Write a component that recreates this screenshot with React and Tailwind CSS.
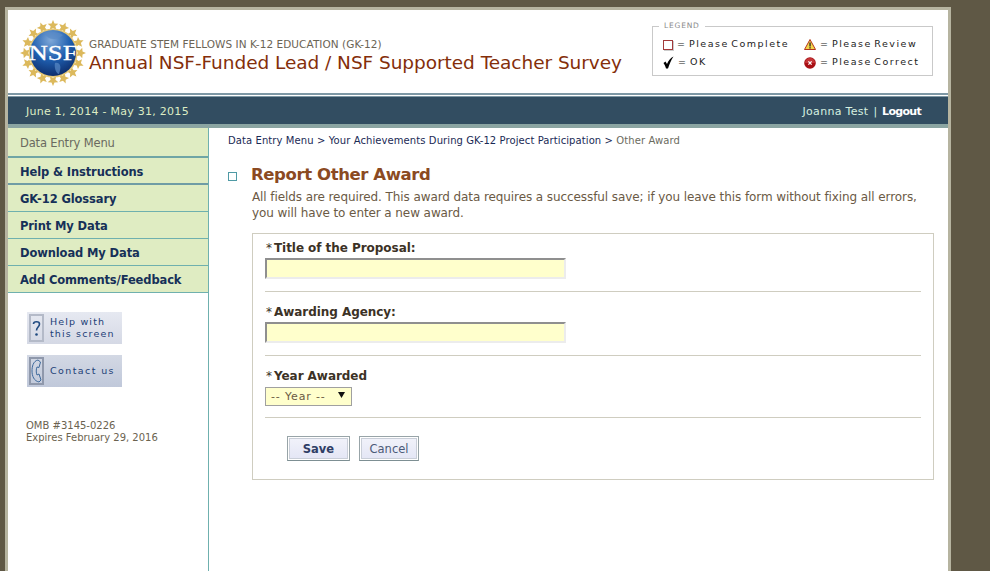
import React from 'react'

const menu = ['Help & Instructions', 'GK-12 Glossary', 'Print My Data', 'Download My Data', 'Add Comments/Feedback']

function star(r) {
  const pts = []
  for (let i = 0; i < 10; i++) {
    const rad = i % 2 === 0 ? r : r * 0.45
    const a = (Math.PI * i) / 5 - Math.PI / 2
    pts.push(`${(rad * Math.cos(a)).toFixed(2)},${(rad * Math.sin(a)).toFixed(2)}`)
  }
  return pts.join(' ')
}

function NsfLogo() {
  const stars = []
  for (let i = 0; i < 16; i++) {
    const a = (i * 360) / 16
    stars.push(
      <g key={i} transform={`rotate(${a}) translate(0,-27.5)`}>
        <polygon points={star(5.6)} fill="#dcb95c" />
      </g>
    )
  }
  return (
    <svg width="66" height="66" viewBox="-33 -33 66 66" className="shrink-0">
      <defs>
        <radialGradient id="globe" cx="45%" cy="22%" r="85%">
          <stop offset="0%" stopColor="#7fa8d8" />
          <stop offset="50%" stopColor="#1f5fb0" />
          <stop offset="100%" stopColor="#0b2560" />
        </radialGradient>
      </defs>
      {stars}
      <circle r="24.5" fill="#e6c877" />
      <circle r="23" fill="url(#globe)" />
      <path d="M-10,-20 C-4,-22 6,-21 10,-18 C6,-14 0,-13 -4,-15 Z M2,10 C7,9 9,13 6,21 C3,21 1,14 2,10 Z" fill="#5a8ac6" opacity="0.7" />
      <text x="0" y="7" textAnchor="middle" fill="#fff" stroke="#fff" strokeWidth="0.3" fontSize="21" fontFamily="'Liberation Serif', serif" textLength="49" lengthAdjust="spacingAndGlyphs">NSF</text>
    </svg>
  )
}

function LegendMark({ type }) {
  if (type === 'complete') {
    return (
      <span className="w-[10px] h-[10px] border border-[#a33a3a] bg-white shadow-[1px_1px_0_#ccc] shrink-0" />
    )
  }
  if (type === 'ok') {
    return (
      <svg width="11" height="13" viewBox="0 0 11 13" className="shrink-0">
        <path d="M0.5,7 L2.5,5.5 L4,8 C5.5,4.5 7.5,2 10.5,0.5 C8,4 6.5,8 5,12.5 L3,12.5 C2.5,10.5 1.5,8.5 0.5,7 Z" fill="#000" />
      </svg>
    )
  }
  if (type === 'review') {
    return (
      <svg width="12" height="11" viewBox="0 0 12 11" className="shrink-0">
        <path d="M6,0.5 L11.5,10.5 L0.5,10.5 Z" fill="#f3d54a" stroke="#b3361e" strokeWidth="1" />
        <rect x="5.4" y="3.5" width="1.3" height="4" fill="#222" />
        <rect x="5.4" y="8.2" width="1.3" height="1.3" fill="#222" />
      </svg>
    )
  }
  return (
    <svg width="12" height="12" viewBox="0 0 12 12" className="shrink-0">
      <circle cx="6" cy="6" r="5.8" fill="#a80f14" />
      <path d="M1,6 A5,5 0 0 1 11,6 Z" fill="#e05a5a" opacity="0.5" />
      <path d="M4.4,4.4 L7.6,7.6 M7.6,4.4 L4.4,7.6" stroke="#fff" strokeWidth="1.3" />
    </svg>
  )
}

function Legend() {
  const text = "text-[9.5px] tracking-[1.5px] [word-spacing:-2px] text-[#222] whitespace-nowrap"
  return (
    <fieldset className="w-[281px] h-[54px] border border-[#c9c9c9] pl-[10px] m-0 shrink-0">
      <legend className="px-[5px] text-[7.5px] leading-[8px] tracking-[0.8px] text-[#8a8a8a] -ml-[4px]">LEGEND</legend>
      <div className="grid grid-cols-[140px_1fr] gap-y-[5px] mt-[8px]">
        <div className="flex items-center gap-[4px] h-[13px]"><LegendMark type="complete" /><span className={text}>= Please Complete</span></div>
        <div className="flex items-center gap-[4px] h-[13px] ml-[1px]"><LegendMark type="review" /><span className={text}>= Please Review</span></div>
        <div className="flex items-center gap-[4px] h-[13px]"><LegendMark type="ok" /><span className={text}>= OK</span></div>
        <div className="flex items-center gap-[4px] h-[13px] ml-[1px]"><LegendMark type="correct" /><span className={text}>= Please Correct</span></div>
      </div>
    </fieldset>
  )
}

function HelpIcon({ kind }) {
  return (
    <span className={`w-[15px] h-[28px] border-2 flex items-center justify-center shrink-0 ${kind === 'help' ? 'border-[#b4bac8]' : 'border-[#8f98ab]'}`}>
      {kind === 'help' ? (
        <svg width="9" height="17" viewBox="0 0 9 17">
          <path d="M1.5,4 C1.5,1 7.5,1 7.5,4 C7.5,7 4.5,7 4.5,10.5" fill="none" stroke="#1f4a80" strokeWidth="1.6" />
          <circle cx="4.5" cy="14.5" r="1.3" fill="#1f4a80" />
        </svg>
      ) : (
        <svg width="11" height="24" viewBox="0 0 11 24">
          <path d="M7,1 C2,2 1,8 1,12 C1,17 3,22 8,23 L10,21 L8,15 L6,16 C5,14 5,10 6,8 L8,8.5 L9.5,3 Z" fill="none" stroke="#3f6a9c" strokeWidth="1" />
        </svg>
      )}
    </span>
  )
}

function FieldInput() {
  return (
    <div className="w-[301px] h-[21px] bg-[#ffffcc] border-2 border-t-[#8f8f8f] border-l-[#8f8f8f] border-r-[#ececec] border-b-[#ececec]" />
  )
}

function Label({ children }) {
  return (
    <div className="h-[17px] leading-[17px] pt-[1px] text-[12px] tracking-[-0.05px] font-bold text-[#3c3226] whitespace-nowrap pl-[1px]">
      <span className="font-normal mr-[2px]">*</span>{children}
    </div>
  )
}

const btn = 'h-[25px] pt-[2px] border border-[#98a4a8] border-b-[#7d8f93] bg-gradient-to-b from-[#f2f3fa] to-[#e3e5f5] shadow-[inset_0_0_0_1px_#fff,inset_0_0_0_2px_#c9ced8] text-[11.5px]'

export default function App() {
  return (
    <div className="w-[990px] h-[571px] overflow-hidden bg-[#5f5845] pt-[7px] pl-[5px] font-['DejaVu_Sans',sans-serif]">
      <div className="w-[946px] h-[564px] border-[3px] border-b-0 border-[#b6b4a0] bg-white flex flex-col">
        <header className="h-[83px] flex items-start shrink-0">
          <div className="ml-[12px] mt-[10px]"><NsfLogo /></div>
          <div className="ml-[3px] mt-[28px] w-[553px]">
            <div className="text-[10.5px] leading-[12px] text-[#6b6455] tracking-[0.05px] whitespace-nowrap">GRADUATE STEM FELLOWS IN K-12 EDUCATION (GK-12)</div>
            <div className="text-[18.5px] leading-[24px] text-[#842e0a] whitespace-nowrap mt-[1px] tracking-[-0.05px]">Annual NSF-Funded Lead / NSF Supported Teacher Survey</div>
          </div>
          <div className="ml-[10px] mt-[12px]"><Legend /></div>
        </header>

        <div className="h-[4px] shrink-0 border-t-2 border-b border-t-[#7e98a5] border-b-[#7e98a5] bg-white" />
        <div className="h-[27px] shrink-0 bg-[#324d61] flex items-center justify-between pl-[18px] pr-[27px] pt-[3px] text-[11px] text-[#dcecc4]">
          <span className="tracking-[0.27px]">June 1, 2014 - May 31, 2015</span>
          <span className="flex">
            <span className="text-[#d6f0e0] tracking-[0.3px]">Joanna Test</span>
            <span className="text-[#d6f0e0] mx-[5px]">|</span>
            <span className="font-bold text-white tracking-[-0.7px]">Logout</span>
          </span>
        </div>
        <div className="h-[4px] shrink-0 bg-[#8ba5a2]" />

        <div className="flex flex-1 min-h-0">
          <aside className="w-[201px] shrink-0 border-r border-[#6fb0ae]">
            <div className="h-[30px] bg-[#dfecc2] border-b-2 border-[#6fa5a5] pl-[12px] pt-[3px] flex items-center text-[11.5px] tracking-[-0.15px] text-[#6a6a60]">Data Entry Menu</div>
            {menu.map((m, i) => (
              <div
                key={m}
                className={`h-[27px] bg-[#dfecc2] pl-[12px] flex items-center text-[11.5px] tracking-[-0.12px] font-bold text-[#163058] whitespace-nowrap ${i === 0 ? 'pt-[4px] border-b-2 border-[#6f9ca5]' : 'pt-[3px] border-b border-[#6fb0ae]'}`}
              >
                {m}
              </div>
            ))}

            <div className="ml-[19px] mt-[19px] w-[95px] h-[32px] bg-gradient-to-b from-[#e6e9f1] to-[#d5d9e5] flex items-center pl-[2px] gap-[6px]">
              <HelpIcon kind="help" />
              <span className="text-[9.5px] leading-[12px] tracking-[1.15px] text-[#1c4076] whitespace-nowrap">Help with<br />this screen</span>
            </div>
            <div className="ml-[19px] mt-[11px] w-[95px] h-[32px] bg-gradient-to-b from-[#d3d8e4] to-[#c0c8da] flex items-center pl-[2px] gap-[6px]">
              <HelpIcon kind="phone" />
              <span className="text-[9.5px] tracking-[1.4px] text-[#1c4076] whitespace-nowrap">Contact us</span>
            </div>

            <div className="ml-[18px] mt-[33px] text-[10px] leading-[12px] text-[#6b6350] whitespace-nowrap">
              OMB #3145-0226<br />Expires February 29, 2016
            </div>
          </aside>

          <main className="flex-1 min-w-0 pl-[19px]">
            <div className="mt-[6px] h-[13px] leading-[13px] text-[10px] tracking-[0.09px] whitespace-nowrap text-[#1a2a55]">
              Data Entry Menu &gt; Your Achievements During GK-12 Project Participation &gt; <span className="text-[#6b6b5e]">Other Award</span>
            </div>

            <div className="flex items-center mt-[16px] h-[24px]">
              <span className="w-[9px] h-[9px] border border-[#4f9aa5] shrink-0 mt-[3px]" />
              <h1 className="ml-[14px] text-[16.5px] tracking-[-0.4px] font-bold text-[#8b4a22] whitespace-nowrap">Report Other Award</h1>
            </div>
            <p className="ml-[24px] mt-[2px] w-[690px] text-[12px] tracking-[-0.09px] leading-[16px] text-[#6b5a45]">
              All fields are required. This award data requires a successful save; if you leave this form without fixing all errors, you will have to enter a new award.
            </p>

            <div className="ml-[24px] mt-[12px] w-[682px] h-[247px] border border-[#cfcdc0] px-[12px] pt-[5px]">
              <Label>Title of the Proposal:</Label>
              <div className="mt-[2px]"><FieldInput /></div>
              <div className="mt-[12px] border-t border-[#cfcdc0]" />

              <div className="mt-[11px]"><Label>Awarding Agency:</Label></div>
              <div className="mt-[2px]"><FieldInput /></div>
              <div className="mt-[12px] border-t border-[#cfcdc0]" />

              <div className="mt-[11px]"><Label>Year Awarded</Label></div>
              <div className="mt-[3px] w-[87px] h-[19px] bg-[#ffffcc] border border-[#a0a0a0] flex items-center justify-between pl-[5px] pr-[6px] pt-[1px] text-[11px] text-[#6b5a45]">
                <span className="tracking-[0.85px]">-- Year --</span>
                <svg width="7" height="6" viewBox="0 0 7 6" className="mb-[4px]"><path d="M0,0 L7,0 L3.5,6 Z" fill="#111" /></svg>
              </div>
              <div className="mt-[11px] border-t border-[#cfcdc0]" />

              <div className="mt-[18px] ml-[22px] flex gap-[9px]">
                <button className={`${btn} w-[63px] font-bold text-[#2f3e66]`}>Save</button>
                <button className={`${btn} w-[60px] text-[#4c5a78]`}>Cancel</button>
              </div>
            </div>
          </main>
        </div>
      </div>
    </div>
  )
}
